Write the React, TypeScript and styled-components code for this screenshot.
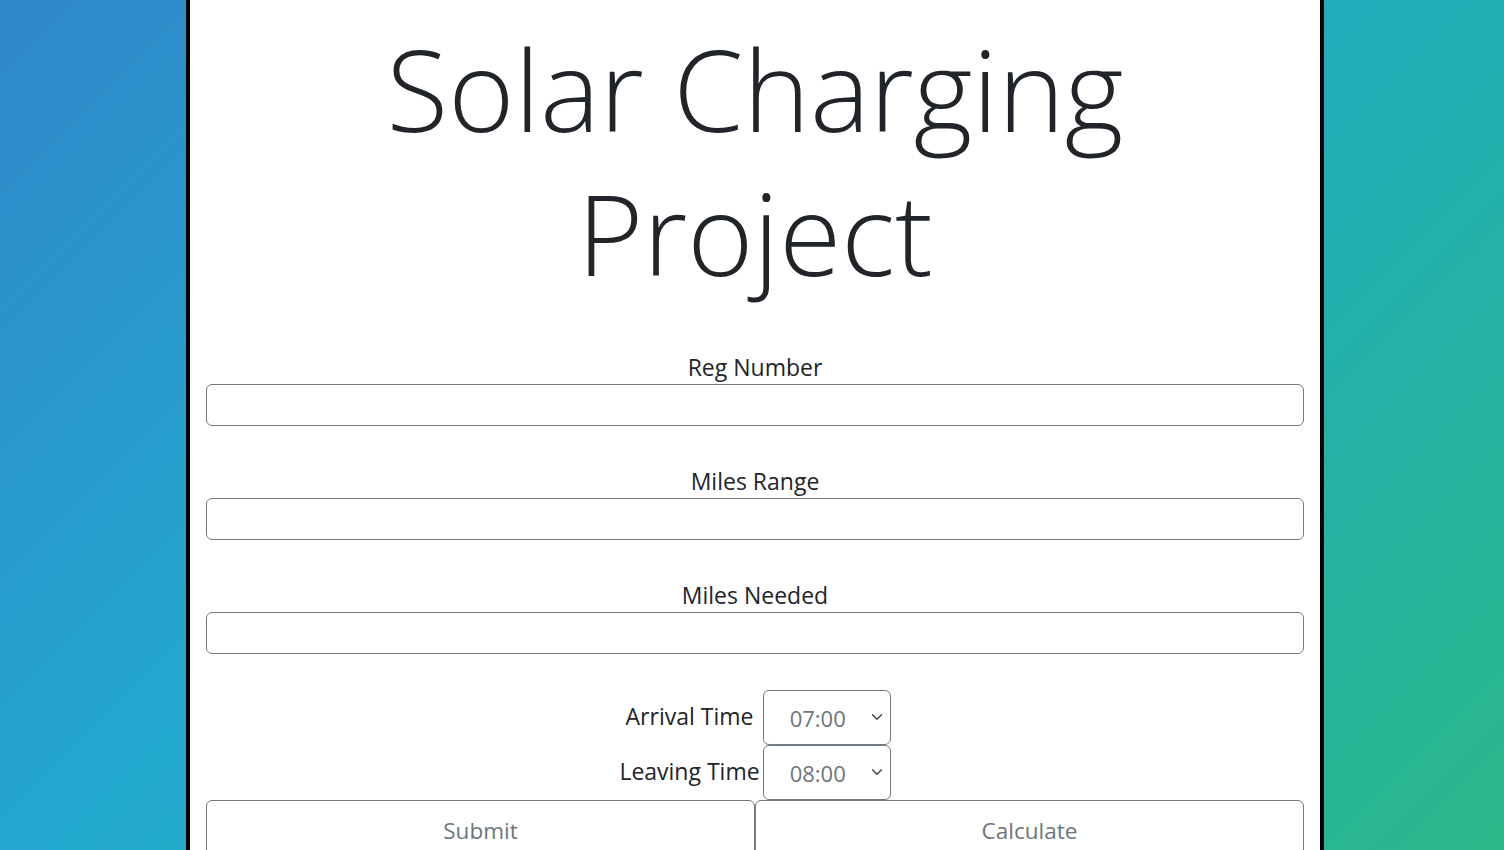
import styled, { createGlobalStyle } from "styled-components";

const GlobalStyle = createGlobalStyle`
    html, body {
        margin: 0;
        height: 100%;
    }
    body {
        background: linear-gradient(135deg, #3087c9 0%, #23a8cf 38%, #22aeb4 64%, #2bb889 100%);
        background-attachment: fixed;
        font-family: "Open Sans", "Noto Sans", sans-serif;
        color: #212529;
        overflow: hidden;
    }
`;

const Panel = styled.main`
    box-sizing: border-box;
    width: 1138px;
    min-height: 100vh;
    margin-left: 186px;
    padding: 16px 16px 0;
    background-color: #ffffff;
    border-left: 4px solid #000000;
    border-right: 4px solid #000000;
`;

const Title = styled.h1`
    margin: 0 0 47px;
    font-size: 113px;
    font-weight: 300;
    line-height: 144px;
    text-align: center;
    color: #212529;
`;

const Group = styled.div<{ $last?: boolean }>`
    margin-bottom: ${(p) => (p.$last ? "36px" : "39px")};
`;

const Label = styled.label`
    display: block;
    font-size: 23px;
    line-height: 33px;
    text-align: center;
`;

const Input = styled.input`
    box-sizing: border-box;
    display: block;
    width: 100%;
    height: 42px;
    border: 1px solid #737b82;
    border-radius: 6px;
    background: #ffffff;
    font: inherit;
`;

const TimeTable = styled.div`
    display: grid;
    grid-template-columns: auto 128px;
    justify-content: center;
    align-items: center;
    margin-right: 3px;
`;

const TimeLabel = styled.span`
    padding: 0 3px 4px;
    font-size: 23px;
    text-align: center;
`;

const SelectWrap = styled.div`
    position: relative;
    height: 55px;
`;

const Select = styled.select`
    box-sizing: border-box;
    appearance: none;
    width: 128px;
    height: 55px;
    padding: 0 0 0 26px;
    border: 1px solid #737b82;
    border-radius: 6px;
    background: #ffffff;
    font-family: "Open Sans", "Noto Sans", sans-serif;
    font-size: 22px;
    color: #6c757d;
`;

const Chevron = styled.svg`
    position: absolute;
    right: 8px;
    top: 21px;
    width: 12px;
    height: 12px;
    pointer-events: none;
`;

const Buttons = styled.div`
    display: grid;
    grid-template-columns: 1fr 1fr;
`;

const Button = styled.button`
    box-sizing: border-box;
    padding: 12px;
    border: 1px solid #737b82;
    border-radius: 6px;
    background: transparent;
    font-family: "Open Sans", "Noto Sans", sans-serif;
    font-size: 22.5px;
    line-height: 36px;
    color: #6c757d;
`;

const fields = ["Reg Number", "Miles Range", "Miles Needed"];

const times = [
    { label: "Arrival Time", value: "07:00" },
    { label: "Leaving Time", value: "08:00" },
];

const hours = Array.from({ length: 24 }, (_, i) => `${String(i).padStart(2, "0")}:00`);

function App() {
    return (
        <>
            <GlobalStyle />
            <Panel>
                <Title>Solar Charging Project</Title>
                {fields.map((f, i) => (
                    <Group key={f} $last={i === fields.length - 1}>
                        <Label>{f}</Label>
                        <Input type="text" />
                    </Group>
                ))}
                <TimeTable>
                    {times.map((t) => [
                        <TimeLabel key={t.label}>{t.label}</TimeLabel>,
                        <SelectWrap key={t.value}>
                            <Select defaultValue={t.value}>
                                {hours.map((h) => (
                                    <option key={h}>{h}</option>
                                ))}
                            </Select>
                            <Chevron viewBox="0 0 16 16">
                                <path d="M2 5l6 6 6-6" fill="none" stroke="#343a40" strokeWidth="1.6" strokeLinecap="round" strokeLinejoin="round" />
                            </Chevron>
                        </SelectWrap>,
                    ])}
                </TimeTable>
                <Buttons>
                    <Button>Submit</Button>
                    <Button>Calculate</Button>
                </Buttons>
            </Panel>
        </>
    );
}

export default App;
